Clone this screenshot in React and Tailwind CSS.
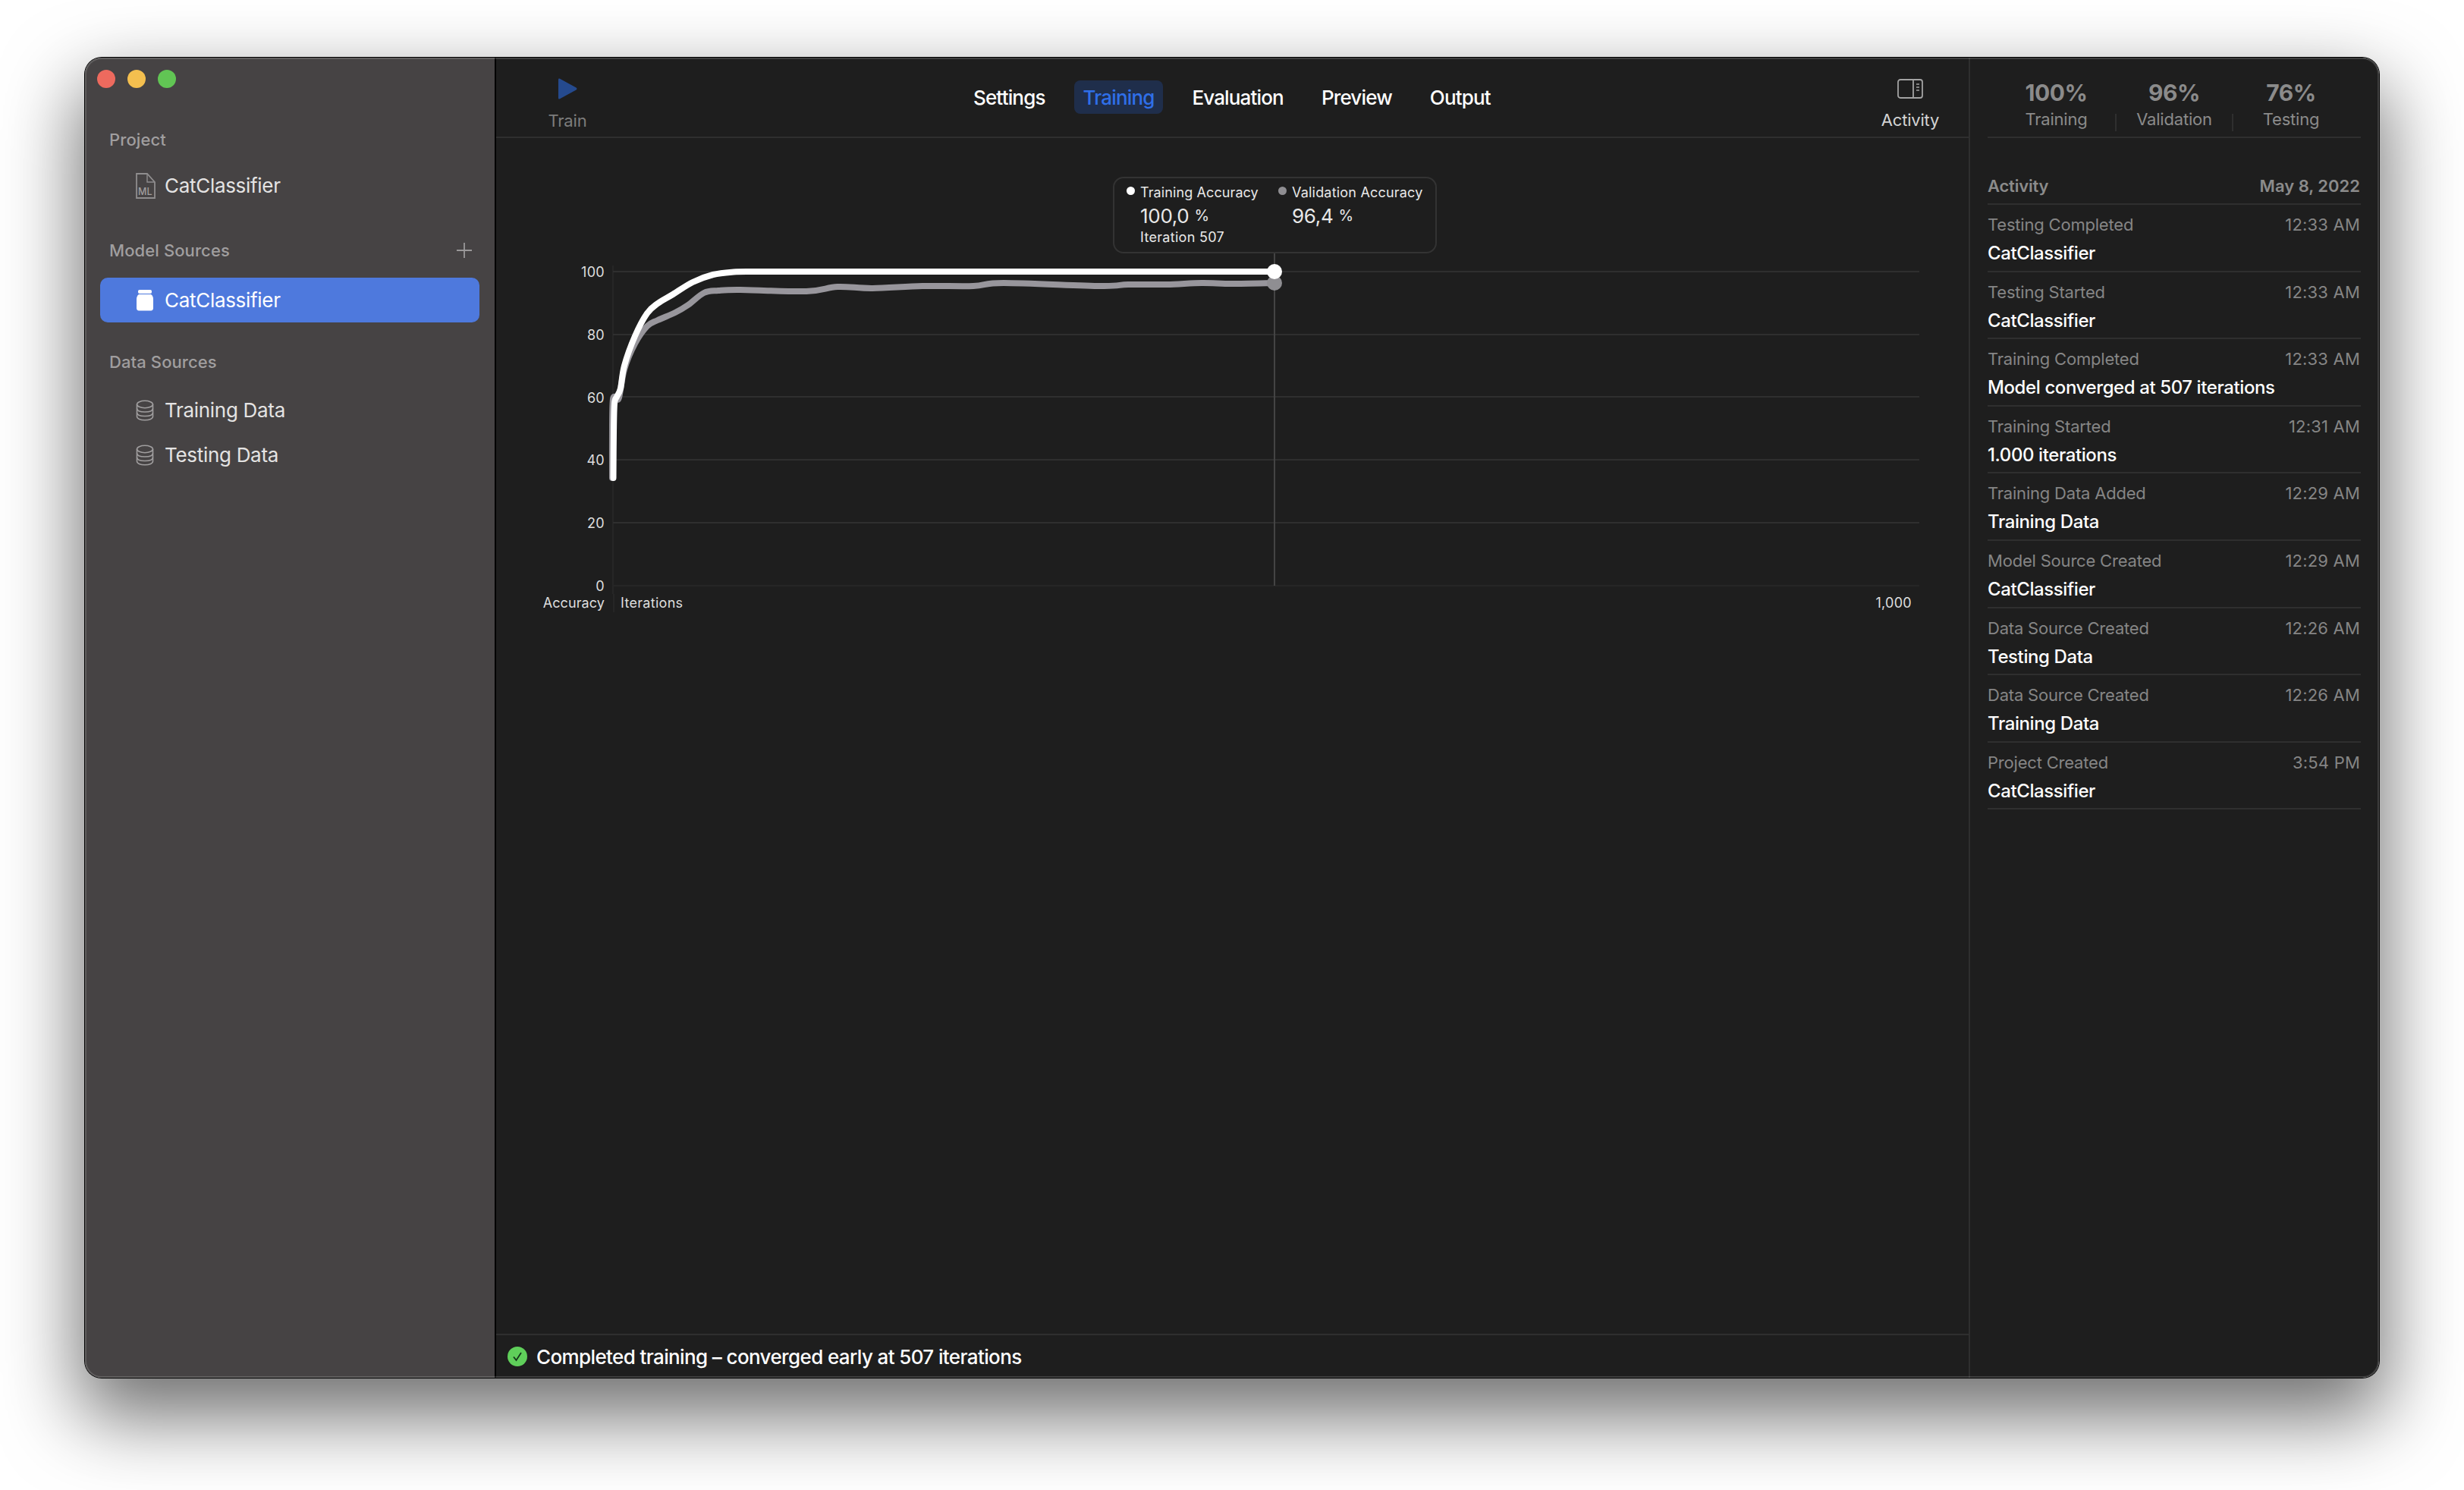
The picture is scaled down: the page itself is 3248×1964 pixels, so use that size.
const activity = [
  { label: 'Testing Completed', time: '12:33 AM', value: 'CatClassifier' },
  { label: 'Testing Started', time: '12:33 AM', value: 'CatClassifier' },
  { label: 'Training Completed', time: '12:33 AM', value: 'Model converged at 507 iterations' },
  { label: 'Training Started', time: '12:31 AM', value: '1.000 iterations' },
  { label: 'Training Data Added', time: '12:29 AM', value: 'Training Data' },
  { label: 'Model Source Created', time: '12:29 AM', value: 'CatClassifier' },
  { label: 'Data Source Created', time: '12:26 AM', value: 'Testing Data' },
  { label: 'Data Source Created', time: '12:26 AM', value: 'Training Data' },
  { label: 'Project Created', time: '3:54 PM', value: 'CatClassifier' },
];

const whiteLine = [[808.5, 630], [809, 570], [810, 532], [813, 523], [818, 512], [823, 482], [837, 443], [853, 413], [867, 400], [887, 388], [913, 372], [940, 362], [967, 358.5], [990, 358], [1010, 358]];
const grayLine = [[807, 630], [807, 560], [808, 526], [812, 524], [816, 524], [823, 487], [837, 453], [853, 430], [867, 422], [890, 412], [907, 402], [928, 386], [947, 383], [976, 382], [1063, 384], [1104, 378], [1150, 380], [1216, 377], [1283, 377], [1323, 373], [1451, 377], [1487, 375], [1538, 375], [1584, 373], [1624, 374], [1680, 373]];

// catmull-rom through the sampled points
function smooth(pts) {
  let d = `M${pts[0][0]} ${pts[0][1]}`;
  for (let i = 0; i < pts.length - 1; i++) {
    const p0 = pts[i - 1] || pts[i];
    const p1 = pts[i];
    const p2 = pts[i + 1];
    const p3 = pts[i + 2] || p2;
    const c1x = p1[0] + (p2[0] - p0[0]) / 6;
    const c1y = p1[1] + (p2[1] - p0[1]) / 6;
    const c2x = p2[0] - (p3[0] - p1[0]) / 6;
    const c2y = p2[1] - (p3[1] - p1[1]) / 6;
    d += ` C${c1x} ${c1y} ${c2x} ${c2y} ${p2[0]} ${p2[1]}`;
  }
  return d;
}

function MlFileIcon() {
  return (
    <svg width="26" height="34" viewBox="0 0 26 34" fill="none">
      <path d="M1 1H15L25 12V33H1Z" stroke="#8f8d8e" strokeWidth="1.8" />
      <path d="M15 1V12H25" stroke="#8f8d8e" strokeWidth="1.4" />
      <text x="3" y="28.500" fontSize="12.500" fontWeight="500" fill="#a09e9f" fontFamily="Inter, sans-serif">ML</text>
    </svg>
  );
}

function JarIcon() {
  return (
    <svg width="24" height="28" viewBox="0 0 24 28" fill="white">
      <rect x="3" y="0" width="18" height="5" rx="2" />
      <path d="M4 6H20C22 7.500 23 9.500 23 12V24C23 26.200 21.800 27.500 20 27.500H4C2.200 27.500 1 26.200 1 24V12C1 9.500 2 7.500 4 6Z" />
    </svg>
  );
}

function DataIcon() {
  return (
    <svg width="24" height="28" viewBox="0 0 24 28" fill="none" stroke="#a09e9f" strokeWidth="1.600">
      <ellipse cx="12" cy="6" rx="10.500" ry="4.700" />
      <path d="M1.500 6V22C1.500 24.800 6 26.800 12 26.800S22.500 24.800 22.500 22V6" />
      <path d="M1.500 11.500C1.500 14.300 6 16 12 16S22.500 14.300 22.500 11.500" />
      <path d="M1.500 17C1.500 19.800 6 21.500 12 21.500S22.500 19.800 22.500 17" />
    </svg>
  );
}

function SidebarRow({ icon, label, selected }) {
  return (
    <div className={selected
      ? 'mx-[20px] h-[59px] flex items-center pl-[47px] rounded-[10px] bg-[#4e79dd] text-white'
      : 'mx-[20px] h-[59px] flex items-center pl-[47px] text-[#e4e3e3]'}>
      <div className="w-[38px] shrink-0 flex">{icon}</div>
      <span className="text-[26px] leading-[30px] tracking-[-0.3px]">{label}</span>
    </div>
  );
}

function SectionTitle({ children, className = '' }) {
  return <div className={`mx-[32px] h-[30px] flex items-center text-[22px] font-medium tracking-[0.1px] text-[#a09e9f] ${className}`}>{children}</div>;
}

function Tab({ label, active }) {
  return (
    <div className={active
      ? 'h-[44px] px-3 flex items-center rounded-[8px] bg-[#1f2e4b] text-[#2f6fe8] text-[26px] font-medium tracking-[-0.85px]'
      : 'h-[44px] px-3 flex items-center text-white text-[26px] font-medium tracking-[-0.85px]'}>
      {label}
    </div>
  );
}

function Sidebar() {
  return (
    <div className="w-[542px] shrink-0 bg-[#464344] border-r-2 border-black flex flex-col">
      <div className="flex gap-4 pt-[16px] pl-[16px]">
        <div className="w-6 h-6 rounded-full bg-[#ed6a5e]" />
        <div className="w-6 h-6 rounded-full bg-[#f4bf4f]" />
        <div className="w-6 h-6 rounded-full bg-[#61c554]" />
      </div>
      <SectionTitle className="mt-[53px]">Project</SectionTitle>
      <div className="mx-[20px] mt-[21px] h-[50px] flex items-center pl-[47px] text-[#e4e3e3]">
        <div className="w-[38px] shrink-0 flex"><MlFileIcon /></div>
        <span className="text-[26px] leading-[30px] tracking-[-0.3px]">CatClassifier</span>
      </div>
      <div className="mt-[45px] flex items-center justify-between pr-[30px]">
        <SectionTitle>Model Sources</SectionTitle>
        <svg width="20" height="20" viewBox="0 0 20 20" stroke="#9a9899" strokeWidth="1.800">
          <path d="M10 0V20M0 10H20" />
        </svg>
      </div>
      <div className="mt-[21px]"><SidebarRow icon={<JarIcon />} label="CatClassifier" selected /></div>
      <SectionTitle className="mt-[37px]">Data Sources</SectionTitle>
      <div className="mt-[19px]">
        <SidebarRow icon={<DataIcon />} label="Training Data" />
        <SidebarRow icon={<DataIcon />} label="Testing Data" />
      </div>
    </div>
  );
}

function Toolbar() {
  return (
    <div className="h-[106px] shrink-0 border-b-2 border-[#2f2f2f] flex items-start">
      <div className="ml-[54px] w-[80px] flex flex-col items-center pt-[27px]">
        <svg width="26" height="28" viewBox="0 0 26 28">
          <path d="M1 2C1 0.500 2 0 3 0.800L24.500 12.500C25.800 13.300 25.800 14.700 24.500 15.500L3 27.200C2 28 1 27.500 1 26Z" fill="#254a8e" />
        </svg>
        <span className="mt-[14px] text-[22px] leading-[28px] text-[#7c7c7c] tracking-[-0.2px]">Train</span>
      </div>
      <div className="ml-[483px] mt-[30px] flex gap-[26px]">
        <Tab label="Settings" />
        <Tab label="Training" active />
        <Tab label="Evaluation" />
        <Tab label="Preview" />
        <Tab label="Output" />
      </div>
      <div className="ml-auto mr-[37px] w-[80px] flex flex-col items-center pt-[28px]">
        <svg width="34" height="26" viewBox="0 0 34 26" fill="none" stroke="#a3a3a3" strokeWidth="1.800">
          <rect x="1" y="1" width="32" height="24" rx="3" />
          <path d="M21 1V25" />
          <path d="M25 7H29M25 11H29M25 15H29" strokeWidth="1.400" />
        </svg>
        <span className="mt-[14px] text-[22px] leading-[28px] text-[#d4d4d4] tracking-[-0.2px]">Activity</span>
      </div>
    </div>
  );
}

function Tooltip() {
  return (
    <div className="ml-[813px] mt-[51px] w-[427px] h-[101px] shrink-0 border-2 border-[#333333] rounded-[14px] flex pl-[16px] pt-[7px] text-[#e8e8e8]">
      <div className="w-[200px] flex">
        <div className="w-[11px] h-[11px] mt-[4px] mr-[7px] rounded-full bg-white" />
        <div>
          <div className="text-[18px] leading-[24px] tracking-[0.1px] whitespace-nowrap">Training Accuracy</div>
          <div className="h-[36px] flex items-center text-[26px] tracking-[-0.3px]">100,0<span className="ml-[7px] text-[20px]">%</span></div>
          <div className="text-[18px] leading-[22px] tracking-[0.3px]">Iteration 507</div>
        </div>
      </div>
      <div className="flex">
        <div className="w-[11px] h-[11px] mt-[4px] mr-[7px] rounded-full bg-[#8f8e92]" />
        <div>
          <div className="text-[18px] leading-[24px] tracking-[0.2px] whitespace-nowrap">Validation Accuracy</div>
          <div className="h-[36px] flex items-center text-[26px] tracking-[-0.3px]">96,4<span className="ml-[7px] text-[20px]">%</span></div>
        </div>
      </div>
    </div>
  );
}

function Chart() {
  const gridY = [358, 441, 523, 606, 689];
  return (
    <div className="text-[18px] leading-[24px] text-[#dedede] tracking-[0.3px]">
      <div className="flex h-[449px]">
        <div className="w-[143px] shrink-0 pt-[13px]">
          <div className="h-[438px] flex flex-col justify-between items-end">
            {[100, 80, 60, 40, 20, 0].map(n => <span key={n} className="h-[24px]">{n}</span>)}
          </div>
        </div>
        <svg className="ml-[3px]" width="1730" height="449" viewBox="800 334 1730 449" fill="none">
          <path d="M808 350V783" stroke="#262626" strokeWidth="2" />
          {gridY.map(y => <path key={y} d={`M808 ${y}H2530`} stroke="#2f2f2f" strokeWidth="2" />)}
          <path d="M808 772H2530" stroke="#262626" strokeWidth="2" />
          <path d="M1680 334V772" stroke="#444444" strokeWidth="2" />
          <path d={smooth(grayLine)} stroke="#98969c" strokeWidth="8" strokeLinecap="round" strokeLinejoin="round" />
          <path d={smooth(whiteLine) + ' L1680 358'} stroke="white" strokeWidth="8" strokeLinecap="round" strokeLinejoin="round" />
          <circle cx="1680" cy="373" r="10" fill="#8f8e92" />
          <circle cx="1680" cy="358" r="10" fill="white" />
        </svg>
      </div>
      <div className="flex h-[24px]">
        <div className="w-[143px] shrink-0 text-right tracking-[0.1px]">Accuracy</div>
        <div className="ml-[11px] w-[1722px] border-l-2 border-[#262626] pl-[8px] pr-[10px] flex justify-between">
          <span>Iterations</span>
          <span>1,000</span>
        </div>
      </div>
    </div>
  );
}

function StatusBar() {
  return (
    <div className="mt-auto h-[58px] shrink-0 border-t-2 border-[#2f2f2f] flex items-center pl-[15px]">
      <svg width="26" height="26" viewBox="0 0 26 26">
        <circle cx="13" cy="13" r="13" fill="#5fcf5a" />
        <path d="M8 13.500L11.500 18L18 8" fill="none" stroke="#14361a" strokeWidth="1.800" />
      </svg>
      <span className="ml-[12px] text-[26px] font-medium tracking-[-0.62px] text-white">Completed training – converged early at 507 iterations</span>
    </div>
  );
}

function Stat({ value, label, className = '' }) {
  return (
    <div className={`flex flex-col items-center ${className}`}>
      <span className="text-[30px] leading-[36px] font-bold text-[#8b8b8b] tracking-[-0.5px]">{value}</span>
      <span className="mt-[3px] text-[22px] leading-[28px] text-[#8b8b8b] tracking-[-0.2px]">{label}</span>
    </div>
  );
}

function ActivityPanel() {
  return (
    <div className="w-[541px] shrink-0 border-l-2 border-[#2f2f2f] pl-[23px] pr-[24px] flex flex-col">
      <div className="h-[106px] shrink-0 border-b-2 border-[#2f2f2f] flex pl-[13px] pt-[28px]">
        <Stat value="100%" label="Training" className="w-[155px]" />
        <div className="w-[2px] h-[23px] mt-[46px] bg-[#2f2f2f]" />
        <Stat value="96%" label="Validation" className="w-[152px]" />
        <div className="w-[2px] h-[23px] mt-[46px] bg-[#2f2f2f]" />
        <Stat value="76%" label="Testing" className="w-[152px]" />
      </div>
      <div className="h-[88px] shrink-0 border-b-2 border-[#2f2f2f] flex justify-between pt-[49px] pr-px text-[22px] leading-[28px] font-semibold text-[#8b8b8b]">
        <span className="tracking-[-0.2px]">Activity</span>
        <span>May 8, 2022</span>
      </div>
      {activity.map((a, i) => (
        <div key={i} className="h-[88.6px] shrink-0 border-b-2 border-[#2f2f2f] pt-[12px]">
          <div className="flex justify-between pr-px text-[22px] leading-[28px] text-[#858585]">
            <span className="tracking-[-0.2px]">{a.label}</span>
            <span className="tracking-[0.2px]">{a.time}</span>
          </div>
          <div className="mt-[10px] text-[24px] leading-[28px] font-medium text-white tracking-[-0.4px]">{a.value}</div>
        </div>
      ))}
    </div>
  );
}

export default function App() {
  return (
    <div className="w-[3248px] h-[1964px] bg-white pt-[76px] pl-[112px] overflow-hidden [font-family:Inter,sans-serif]">
      <div className="relative w-[3024px] h-[1740px] rounded-[22px] shadow-[0_0_0_1px_#000,0_44px_100px_8px_rgba(0,0,0,0.56)]">
        <div className="w-full h-full rounded-[22px] overflow-hidden flex bg-[#1e1e1e]">
          <Sidebar />
          <div className="flex-1 min-w-0 flex flex-col">
            <Toolbar />
            <Tooltip />
            <Chart />
            <StatusBar />
          </div>
          <ActivityPanel />
        </div>
        <div className="absolute inset-0 rounded-[22px] border-2 border-white/15 pointer-events-none" />
      </div>
    </div>
  );
}
